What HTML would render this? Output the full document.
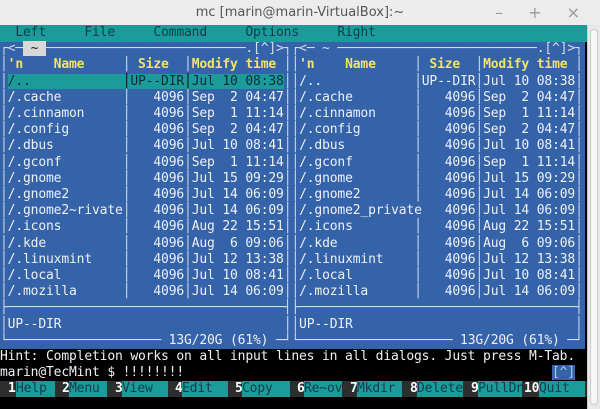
<!DOCTYPE html>
<html><head><meta charset="utf-8"><style>
*{margin:0;padding:0;box-sizing:border-box}
body{width:600px;height:409px;overflow:hidden;background:#000;position:relative;font-family:"DejaVu Sans Mono","Liberation Mono",monospace}
#title{position:absolute;left:0;top:0;width:600px;height:25px;background:#ececec;color:#555;font:13px "DejaVu Sans","Liberation Sans",sans-serif;text-align:center;line-height:25px}
#ctl{position:absolute;top:0;right:10px;font:16px "DejaVu Sans",sans-serif;color:#999;line-height:25px;letter-spacing:10px}
#sb{position:absolute;left:587px;top:25px;width:13px;height:384px;background:#e8e8e8;border-left:1px solid #ccc}
#sb div{position:absolute;left:2px;top:4px;width:8px;height:376px;border-radius:4px;background:#f6f6f6;border:1px solid #ccc}
#menu{position:absolute;left:0;top:25px;width:587px;height:17px;background:#1c9b9b}
#blue{position:absolute;left:0;top:42px;width:585px;height:307px;background:#3463a9}
pre{position:absolute;left:0;top:25px;font-size:13px;letter-spacing:-0.16px;line-height:16.2px;color:#eef0f4;white-space:pre}
.b{color:#d6dce8}
.y{color:#f2e26a;font-weight:bold}
.hl{background:#d8d8d8;color:#222}
.c{background:#1c9b9b;color:#0d2a3a}
.c .b{color:#111}
.m{color:#173a4a}
.k{background:#3463a9;color:#9fd0e8}
#fk{position:absolute;left:0;top:381px;width:587px;height:16px;background:#2e2e2e}
#fk span{position:absolute;top:0;height:16px;font-size:13px;letter-spacing:-0.16px;line-height:16px;white-space:pre}
.n{color:#fff;font-weight:bold}
.l{background:#1c9b9b;color:#0f3f4a}
</style></head><body>
<div id="title">mc [marin@marin-VirtualBox]:~</div>
<div id="ctl">– + ×</div>
<div id="sb"><div></div></div>
<div id="menu"></div>
<div id="blue"></div>
<pre><span class="m">  Left     File     Command     Options     Right</span>
<span class="b">┌&lt;─<span class="hl"> ~ </span>──────────────────────────.[^]&gt;┐┌&lt;─ ~ ──────────────────────────.[^]&gt;┐</span>
<span class="b">│</span><span class="y">'n    Name     </span><span class="b">│</span><span class="y"> Size  </span><span class="b">│</span><span class="y">Modify time </span><span class="b">││</span><span class="y">'n    Name     </span><span class="b">│</span><span class="y"> Size  </span><span class="b">│</span><span class="y">Modify time </span><span class="b">│</span>
<span class="b">│</span><span class="c">/..            <span class="b">│</span>UP--DIR<span class="b">│</span>Jul 10 08:38</span><span class="b">││</span>/..            <span class="b">│</span>UP--DIR<span class="b">│</span>Jul 10 08:38<span class="b">│</span>
<span class="b">│</span>/.cache        <span class="b">│</span>   4096<span class="b">│</span>Sep  2 04:47<span class="b">││</span>/.cache        <span class="b">│</span>   4096<span class="b">│</span>Sep  2 04:47<span class="b">│</span>
<span class="b">│</span>/.cinnamon     <span class="b">│</span>   4096<span class="b">│</span>Sep  1 11:14<span class="b">││</span>/.cinnamon     <span class="b">│</span>   4096<span class="b">│</span>Sep  1 11:14<span class="b">│</span>
<span class="b">│</span>/.config       <span class="b">│</span>   4096<span class="b">│</span>Sep  2 04:47<span class="b">││</span>/.config       <span class="b">│</span>   4096<span class="b">│</span>Sep  2 04:47<span class="b">│</span>
<span class="b">│</span>/.dbus         <span class="b">│</span>   4096<span class="b">│</span>Jul 10 08:41<span class="b">││</span>/.dbus         <span class="b">│</span>   4096<span class="b">│</span>Jul 10 08:41<span class="b">│</span>
<span class="b">│</span>/.gconf        <span class="b">│</span>   4096<span class="b">│</span>Sep  1 11:14<span class="b">││</span>/.gconf        <span class="b">│</span>   4096<span class="b">│</span>Sep  1 11:14<span class="b">│</span>
<span class="b">│</span>/.gnome        <span class="b">│</span>   4096<span class="b">│</span>Jul 15 09:29<span class="b">││</span>/.gnome        <span class="b">│</span>   4096<span class="b">│</span>Jul 15 09:29<span class="b">│</span>
<span class="b">│</span>/.gnome2       <span class="b">│</span>   4096<span class="b">│</span>Jul 14 06:09<span class="b">││</span>/.gnome2       <span class="b">│</span>   4096<span class="b">│</span>Jul 14 06:09<span class="b">│</span>
<span class="b">│</span>/.gnome2~rivate<span class="b">│</span>   4096<span class="b">│</span>Jul 14 06:09<span class="b">││</span>/.gnome2_private   4096<span class="b">│</span>Jul 14 06:09<span class="b">│</span>
<span class="b">│</span>/.icons        <span class="b">│</span>   4096<span class="b">│</span>Aug 22 15:51<span class="b">││</span>/.icons        <span class="b">│</span>   4096<span class="b">│</span>Aug 22 15:51<span class="b">│</span>
<span class="b">│</span>/.kde          <span class="b">│</span>   4096<span class="b">│</span>Aug  6 09:06<span class="b">││</span>/.kde          <span class="b">│</span>   4096<span class="b">│</span>Aug  6 09:06<span class="b">│</span>
<span class="b">│</span>/.linuxmint    <span class="b">│</span>   4096<span class="b">│</span>Jul 12 13:38<span class="b">││</span>/.linuxmint    <span class="b">│</span>   4096<span class="b">│</span>Jul 12 13:38<span class="b">│</span>
<span class="b">│</span>/.local        <span class="b">│</span>   4096<span class="b">│</span>Jul 10 08:41<span class="b">││</span>/.local        <span class="b">│</span>   4096<span class="b">│</span>Jul 10 08:41<span class="b">│</span>
<span class="b">│</span>/.mozilla      <span class="b">│</span>   4096<span class="b">│</span>Jul 14 06:09<span class="b">││</span>/.mozilla      <span class="b">│</span>   4096<span class="b">│</span>Jul 14 06:09<span class="b">│</span>
<span class="b">├────────────────────────────────────┤├────────────────────────────────────┤</span>
<span class="b">│</span>UP--DIR                             <span class="b">││</span>UP--DIR                             <span class="b">│</span>
<span class="b">└────────────────────</span> 13G/20G (61%) <span class="b">─┘└────────────────────</span> 13G/20G (61%) <span class="b">─┘</span>
Hint: Completion works on all input lines in all dialogs. Just press M-Tab.
marin@TecMint $ !!!!!!!!                                                <span class="k">[^]</span></pre>
<div id="fk">
<span class="n" style="left:8px">1</span><span class="l" style="left:16px;width:39px">Help</span>
<span class="n" style="left:62px">2</span><span class="l" style="left:69px;width:38px">Menu</span>
<span class="n" style="left:115px">3</span><span class="l" style="left:122px;width:46px">View</span>
<span class="n" style="left:175px">4</span><span class="l" style="left:182px;width:46px">Edit</span>
<span class="n" style="left:235px">5</span><span class="l" style="left:242px;width:48px">Copy</span>
<span class="n" style="left:297px">6</span><span class="l" style="left:304px;width:38px">Re~ov</span>
<span class="n" style="left:350px">7</span><span class="l" style="left:357px;width:45px">Mkdir</span>
<span class="n" style="left:410px">8</span><span class="l" style="left:417px;width:46px">Delete</span>
<span class="n" style="left:471px">9</span><span class="l" style="left:478px;width:44px">PullDn</span>
<span class="n" style="left:524px">10</span><span class="l" style="left:539px;width:46px">Quit</span>
</div>
</body></html>
